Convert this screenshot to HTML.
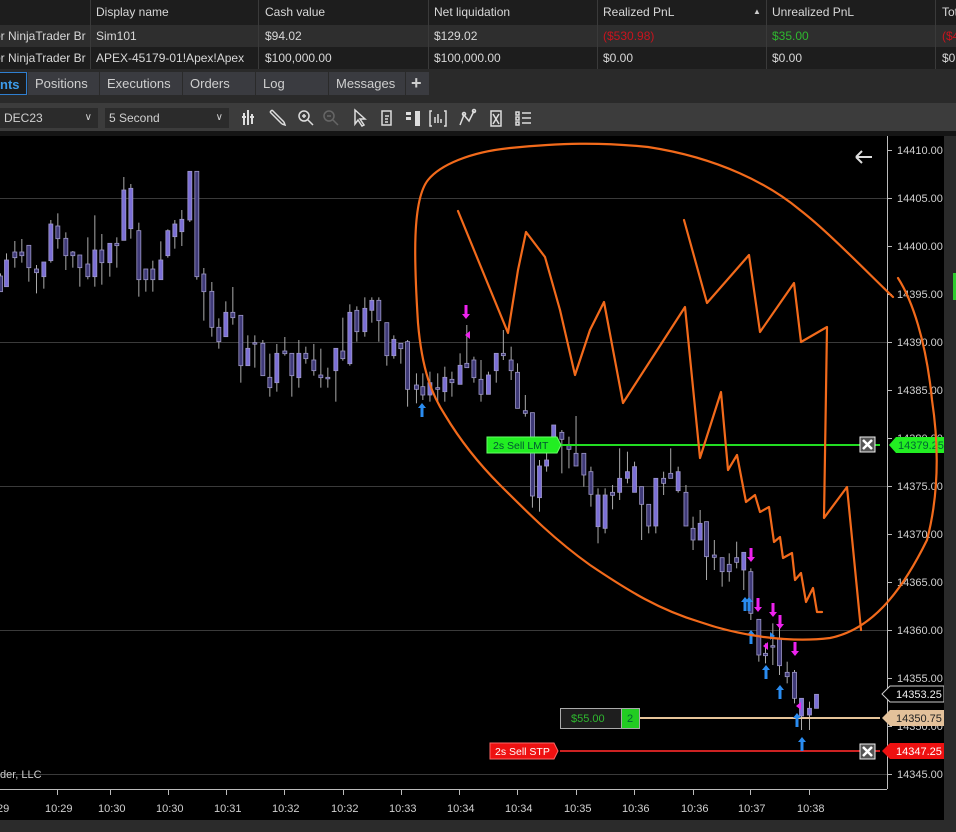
<!DOCTYPE html>
<html><head><meta charset="utf-8"><style>
*{margin:0;padding:0;box-sizing:border-box}
body{width:956px;height:832px;background:#000;font-family:"Liberation Sans",sans-serif;font-size:12px;color:#d8d8d8;position:relative;overflow:hidden}
.a{position:absolute}
.hdr{top:0;left:0;width:956px;height:25px;background:#1d1d1d}
.r1{top:25px;left:0;width:956px;height:22px;background:#2e2e2e}
.r2{top:47px;left:0;width:956px;height:22px;background:#1d1d1d}
.sep{position:absolute;top:0;width:1px;height:69px;background:#3a3a3a}
.c{position:absolute;line-height:22px;white-space:nowrap}
.tabs{top:69px;left:0;width:956px;height:34px;background:#2a2a2a}
.tab{position:absolute;top:3px;height:23px;background:#3a3b40;color:#cfcfcf;font-size:13px;line-height:23px;padding-left:7px;border-right:1px solid #2a2a2a}
.tb{top:103px;left:0;width:956px;height:28px;background:#3c3c3c}
.dd{position:absolute;top:5px;height:20px;background:#2b2b2b;color:#d0d0d0;font-size:12px;line-height:20px;padding-left:4px}
</style></head><body>
<div class="a hdr"></div><div class="a r1"></div><div class="a r2"></div>
<div class="sep" style="left:90px"></div><div class="sep" style="left:258px"></div><div class="sep" style="left:428px"></div><div class="sep" style="left:597px"></div><div class="sep" style="left:766px"></div><div class="sep" style="left:935px"></div>
<div class="c" style="left:96px;top:1px">Display name</div>
<div class="c" style="left:265px;top:1px">Cash value</div>
<div class="c" style="left:434px;top:1px">Net liquidation</div>
<div class="c" style="left:603px;top:1px">Realized PnL</div>
<div class="c" style="left:753px;top:1px;font-size:8px;color:#ccc">▲</div>
<div class="c" style="left:772px;top:1px">Unrealized PnL</div>
<div class="c" style="left:942px;top:1px">Tot</div>
<div class="c" style="left:-6px;top:25px">or NinjaTrader Br</div>
<div class="c" style="left:96px;top:25px">Sim101</div>
<div class="c" style="left:265px;top:25px">$94.02</div>
<div class="c" style="left:434px;top:25px">$129.02</div>
<div class="c" style="left:603px;top:25px;color:#c8141e">($530.98)</div>
<div class="c" style="left:772px;top:25px;color:#2eb82e">$35.00</div>
<div class="c" style="left:942px;top:25px;color:#c8141e">($4</div>
<div class="c" style="left:-6px;top:47px">or NinjaTrader Br</div>
<div class="c" style="left:96px;top:47px">APEX-45179-01!Apex!Apex</div>
<div class="c" style="left:265px;top:47px">$100,000.00</div>
<div class="c" style="left:434px;top:47px">$100,000.00</div>
<div class="c" style="left:603px;top:47px">$0.00</div>
<div class="c" style="left:772px;top:47px">$0.00</div>
<div class="c" style="left:942px;top:47px">$0.</div>
<div class="a tabs">
<div class="tab" style="left:0;width:27px;background:#1c1c1c;color:#3d9be9;font-weight:bold;padding-left:0;border:1px solid #2f7fd0;border-left:none">nts</div>
<div class="tab" style="left:28px;width:72px">Positions</div>
<div class="tab" style="left:100px;width:83px">Executions</div>
<div class="tab" style="left:183px;width:73px">Orders</div>
<div class="tab" style="left:256px;width:73px">Log</div>
<div class="tab" style="left:329px;width:77px">Messages</div>
<div class="tab" style="left:406px;width:24px;font-size:18px;font-weight:bold;padding-left:5px">+</div>
</div>
<div class="a tb">
<div class="dd" style="left:0;width:98px">DEC23<span style="position:absolute;right:6px;font-size:10px">&#x2228;</span></div>
<div class="dd" style="left:105px;width:124px">5 Second<span style="position:absolute;right:6px;font-size:10px">&#x2228;</span></div>
<svg class="a" style="left:236px;top:4px" width="310" height="22" viewBox="0 0 310 22" fill="none" stroke="#ddd" stroke-width="1.5">
<path d="M8 6v12M12 3v15M16 7v10M6 10h4M14 10h4" stroke-width="2"/>
<path d="M34 5l12 12M36 3l12 12M34 5l2-2M46 17l3 1-1-3"/>
<circle cx="68" cy="9" r="5"/><path d="M72 13l5 5M66 9h4M68 7v4"/>
<circle cx="93" cy="9" r="5" stroke="#666"/><path d="M97 13l5 5M91 9h4" stroke="#666"/>
<path d="M119 3l0 14 3-4 4 6 2-1-4-6 5 0z"/>
<path d="M146 4h9v14h-9zM149 9h4M149 12h3M149 15h3"/>
<path d="M170 5h5v3h-5zM170 10h5v3h-5zM179 4h5v15h-5z" fill="#ddd" stroke="none"/>
<path d="M196 4h-2v15h2M208 4h2v15h-2M199 10v6M202 7v9M205 12v4"/>
<path d="M224 18l4-10 5 6 5-10"/><circle cx="228" cy="7" r="1.5"/><circle cx="238" cy="4" r="1.5"/>
<path d="M255 4h10v15h-10zM257 7l6 10M263 7l-6 10"/>
<path d="M280 5h3v3h-3zM280 10h3v3h-3zM280 15h3v3h-3zM286 6h9M286 11h9M286 16h9"/>
</svg>
</div>
<div class="a" style="left:0;top:131px;width:956px;height:5px;background:#151515"></div>
<div class="a" style="left:944px;top:136px;width:12px;height:696px;background:#2a2a2a"></div>
<div class="a" style="left:953px;top:273px;width:3px;height:27px;background:#2ecc2e"></div>
<div class="a" style="left:0;top:820px;width:956px;height:12px;background:#2b2b2b"></div>
<svg id="ch" class="a" style="left:0;top:136px" width="944" height="684" viewBox="0 136 944 684" font-family="Liberation Sans, sans-serif">
<g stroke="#3a3a3a" stroke-width="1">
<line x1="0" y1="198.5" x2="887" y2="198.5"/><line x1="0" y1="342.5" x2="887" y2="342.5"/><line x1="0" y1="486.5" x2="887" y2="486.5"/><line x1="0" y1="630.5" x2="887" y2="630.5"/><line x1="0" y1="774.5" x2="887" y2="774.5"/>
</g>
<line x1="887.5" y1="136" x2="887.5" y2="789" stroke="#bbb"/>
<line x1="0" y1="789.5" x2="887" y2="789.5" stroke="#bbb"/>
<g id="candles"></g>
<g id="axis" fill="#d0d0d0" font-size="11"></g>
<path d="M856 157h16M856 157l6-6M856 157l6 6" stroke="#ddd" stroke-width="2" fill="none"/>
<text x="0" y="778" fill="#ccc" font-size="11">der, LLC</text>
<line x1="560" y1="445" x2="880" y2="445" stroke="#22dd22" stroke-width="2"/>
<path d="M487 437h70l4 8-4 8h-70z" fill="#22ee22" stroke="#66ff66"/>
<text x="493" y="449" font-size="10.5" fill="#053">2s  Sell LMT</text>
<rect x="860" y="437" width="15" height="15" fill="#555" stroke="#eee"/><path d="M863 440l9 9M872 440l-9 9" stroke="#fff" stroke-width="2.5"/>
<path d="M889 445l7-8h49v16h-49z" fill="#22ee22"/><text x="898" y="449" font-size="11" fill="#063">14379.25</text>
<line x1="640" y1="718" x2="880" y2="718" stroke="#e6c49a" stroke-width="2"/>
<rect x="560.5" y="708.5" width="61" height="20" fill="#1e1e1e" stroke="#aaa"/><text x="571" y="722" font-size="11" fill="#2eb82e">$55.00</text>
<rect x="621.5" y="708.5" width="18" height="20" fill="#22cc22" stroke="#aaa"/><text x="627" y="722" font-size="11" fill="#063">2</text>
<path d="M882 718l8-8h54v16h-54z" fill="#e3c19a"/><text x="896" y="722" font-size="11" fill="#222">14350.75</text>
<path d="M882 694l8-8h54v16h-54z" fill="#000" stroke="#ccc"/><text x="896" y="698" font-size="11" fill="#eee">14353.25</text>
<line x1="560" y1="751" x2="880" y2="751" stroke="#cc2222" stroke-width="2"/>
<path d="M490 743h64l4 8-4 8h-64z" fill="#ee1111" stroke="#ff6666"/>
<text x="495" y="755" font-size="10.5" fill="#fff">2s  Sell STP</text>
<rect x="860" y="744" width="15" height="15" fill="#555" stroke="#eee"/><path d="M863 747l9 9M872 747l-9 9" stroke="#fff" stroke-width="2.5"/>
<path d="M882 751l8-8h54v16h-54z" fill="#ee1111"/><text x="896" y="755" font-size="11" fill="#fff">14347.25</text>
<g id="arrows"></g>
<g fill="none" stroke="#f26a1b" stroke-width="2.2" stroke-linecap="round" stroke-linejoin="round">
<path d="M893 297C860 265 826 230 800 210C770 185 720 158 648 147C600 142 560 143 510 148C470 152 440 165 428 180C412 200 414 260 418 323C422 370 432 395 445 415C460 440 480 465 500 485C530 515 555 540 590 565C630 592 660 610 700 622C740 636 790 643 830 638C870 630 900 595 927 540C940 490 938 440 932 400C926 340 912 300 898 278"/>
<path d="M458 211L508 333L518 270L526 232L545 257L560 310L575 375L590 330L604 302L623 403L685 307L700 458L721 392L728 470L737 455L746 502L755 495L760 512L769 507L774 542L780 537L783 558L792 553L795 580L801 573L806 602L813 588L817 612L822 612"/>
<path d="M684 220L707 303L749 255L760 332L794 283L801 342L827 327L824 518L847 487L861 630"/>
</g>
</svg>
<script>
var g=document.getElementById('candles'),s='';
function cd(x,t,b,wt,wb,L){
 if(b-t<1.5){b=t+1.5}
 s+='<line x1="'+(x+0.5)+'" y1="'+wt+'" x2="'+(x+0.5)+'" y2="'+wb+'" stroke="#aaa" stroke-width="1"/>';
 s+='<rect x="'+(x-1.5)+'" y="'+t+'" width="4" height="'+(b-t)+'" fill="'+(L?'#7b6fd6':'#3f3a78')+'" stroke="#9e98c8" stroke-width="0.8"/>';
}
var A=[[0,408,455,400,455,0],[18,360,440,340,440,1],[43,336,353,303,383,0],[64,336,347,297,368,0],[85,316,383,316,425,0],[108,387,398,375,460,0],[130,366,410,366,446,1],[151,252,362,240,368,1],[172,258,296,220,326,0],[196,295,347,277,390,0],[217,336,347,333,383,0],[238,345,383,345,440,0],[262,372,410,292,418,0],[283,330,410,226,440,1],[304,330,368,282,434,0],[328,310,368,310,410,1],[349,310,317,292,383,0],[370,150,301,111,301,1],[391,145,266,132,296,1],[415,272,419,248,470,0],[436,387,419,387,455,0],[457,387,419,362,455,0],[481,360,419,304,419,1],[502,272,347,268,353,1],[523,252,290,240,326,1],[544,238,275,210,318,1],[568,94,240,94,246,1],[589,94,410,94,419,0],[610,402,455,384,542,0],[634,454,562,426,590,0],[655,562,605,535,626,0],[676,517,590,484,590,1],[697,517,533,441,554,0],[721,526,677,526,728,0],[742,625,677,586,677,1],[763,608,612,586,683,0],[787,610,707,600,707,0],[808,712,743,641,770,0],[829,640,728,612,755,1],[853,633,641,591,647,0],[874,640,707,640,770,0],[895,640,713,600,743,1],[916,640,656,620,671,0],[940,660,692,612,707,0],[961,705,713,626,743,0],[982,712,713,683,743,0],[1006,625,692,625,785,1],[1027,633,656,533,662,0],[1048,517,671,493,677,1],[1069,511,575,499,605,0],[1093,505,575,472,590,1],[1114,481,511,472,548,1],[1135,481,542,472,605,0],[1159,548,647,548,677,0],[1180,598,647,586,656,1],[1201,610,626,610,671,0]];
A.forEach(function(a){cd(a[0]/3,a[1]/3+140,a[2]/3+140,a[3]/3+140,a[4]/3+140,a[5])});
var B=[[20,605,748,600,800,0],[45,735,748,700,790,0],[63,740,765,700,780,0],[83,728,765,695,785,1],[105,743,748,700,790,0],[125,712,755,680,785,1],[145,718,728,695,770,0],[168,676,733,640,733,1],[187,670,683,555,683,0],[207,660,713,650,728,0],[227,718,763,660,785,0],[248,705,763,695,763,1],[270,640,692,640,728,1],[290,640,647,570,660,0],[312,660,692,620,720,0],[330,697,805,670,805,0],[352,812,820,765,830,0],[372,818,1068,818,1103,0],[392,978,1073,960,1115,1],[412,960,978,925,995,1],[432,855,910,855,910,1],[455,877,898,870,1000,0],[475,917,928,890,985,0],[495,940,978,828,978,0],[517,940,1005,940,1040,0],[537,995,1063,980,1100,0],[557,1065,1160,1045,1210,1],[577,1065,1165,1045,1180,1],[598,1057,1066,1035,1108,0],[618,1015,1057,925,1080,1],[640,995,1015,935,1030,1],[660,980,1057,965,1057,1],[680,1040,1093,1040,1200,0],[700,1093,1158,1093,1180,0],[720,1015,1158,1015,1180,1],[742,1015,1030,995,1065,0],[762,1000,1015,925,1015,0],[783,995,1052,980,1058,1],[805,1057,1158,1035,1158,0],[825,1165,1200,1130,1230,0],[845,1150,1200,1110,1200,1],[863,1145,1250,1145,1320,0],[885,1245,1252,1200,1290,0],[907,1253,1295,1253,1340,0],[927,1273,1295,1240,1325,0],[948,1253,1267,1205,1285,0],[968,1237,1290,1237,1350,1],[988,1295,1420,1285,1440,0]];
B.forEach(function(a){cd(400+a[0]/2.82,140+a[1]/3,140+a[2]/3,140+a[3]/3,140+a[4]/3,a[5])});
var C=[[835,598,705,598,725,0],[855,700,707,670,730,0],[877,677,680,610,735,0],[897,655,737,620,765,0],[920,757,770,725,790,0],[942,757,835,750,850,0],[963,835,888,835,930,1],[987,865,885,845,930,1],[1008,823,865,823,865,1]];
C.forEach(function(a){cd(480+a[0]/3,420+a[1]/3,420+a[2]/3,420+a[3]/3,420+a[4]/3,a[5])});
g.innerHTML=s;
var ax=document.getElementById('axis'),t='';
for(var i=0;i<14;i++){var p=14410-5*i,y=150+48*(i);t+='<line x1="887" y1="'+(y+.5)+'" x2="892" y2="'+(y+.5)+'" stroke="#bbb"/><text x="897" y="'+(y+4)+'">'+p.toFixed(2)+'</text>';}
var tx=[57,110,168,226,284,343,401,459,517,576,634,693,750,809],tl=['10:29','10:30','10:30','10:31','10:32','10:32','10:33','10:34','10:34','10:35','10:36','10:36','10:37','10:38'];
t+='<text x="-3" y="812">29</text>';
for(i=0;i<14;i++){t+='<line x1="'+tx[i]+'.5" y1="789" x2="'+tx[i]+'.5" y2="795" stroke="#bbb"/><text x="'+(tx[i]-12)+'" y="812">'+tl[i]+'</text>';}
ax.innerHTML=t;
var ar=document.getElementById('arrows'),u='';
function up(x,y){u+='<path d="M'+x+' '+y+'l-4 5h2.5v9h3v-9h2.5z" fill="#2a8cf0"/>'}
function dn(x,y){u+='<path d="M'+x+' '+(y+14)+'l-4 -5h2.5v-9h3v9h2.5z" fill="#ee22ee"/>'}
up(422,403);up(745,597);up(749,597);up(751,630);up(766,665);up(780,685);up(797,713);up(802,737);
dn(466,305);dn(751,548);dn(758,598);dn(773,603);dn(780,615);dn(795,642);
u+='<path d="M465 335l5-4v8z" fill="#ee22ee"/><path d="M775 636l-5-4v8z" fill="#2a8cf0"/><path d="M763 646l5-4v8z" fill="#ee22ee"/><path d="M796 706l5-4v8z" fill="#ee22ee"/>';
ar.innerHTML=u;
</script>
</body></html>
